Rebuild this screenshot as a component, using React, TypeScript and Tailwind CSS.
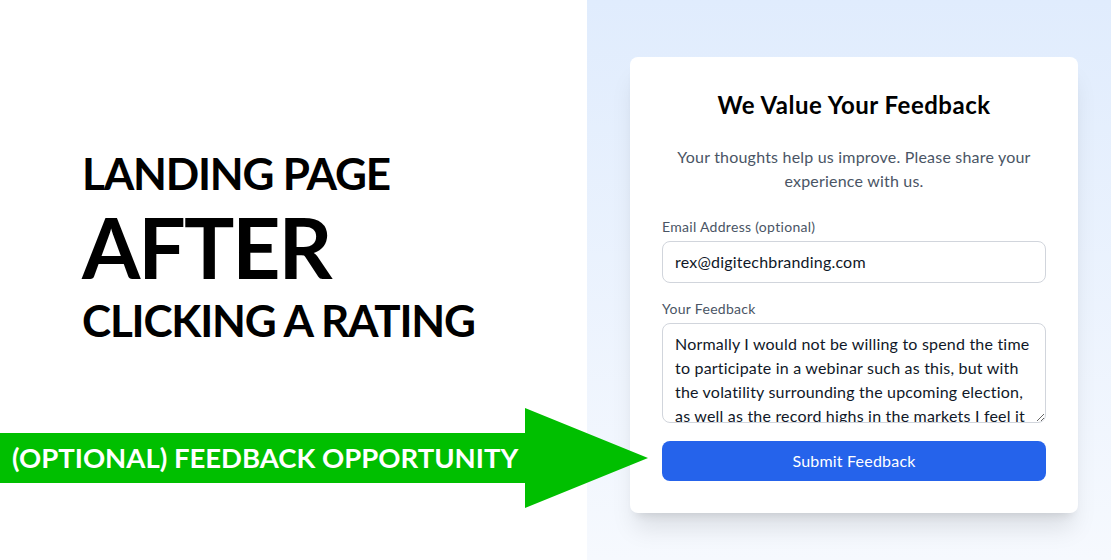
import React, { useState } from 'react';

const feedbackText =
  'Normally I would not be willing to spend the time to participate in a webinar such as this, but with the volatility surrounding the upcoming election, as well as the record highs in the markets I feel it was worth my while.';

const FeedbackArrow: React.FC = () => (
  <div className="absolute left-0 top-[408px] h-[100px] w-[650px] pointer-events-none">
    <svg className="absolute inset-0" width="650" height="100" viewBox="0 0 650 100">
      <polygon points="0,25 525,25 525,0 648,50 525,100 525,75 0,75" fill="#00bf00" />
    </svg>
    <div
      className="absolute left-[12px] top-[25px] h-[50px] flex items-center text-white font-bold text-[27.5px] leading-none"
      style={{ fontFamily: 'Lato, "Open Sans", sans-serif' }}
    >
      (OPTIONAL) FEEDBACK OPPORTUNITY
    </div>
  </div>
);

const App: React.FC = () => {
  const [email, setEmail] = useState('rex@digitechbranding.com');
  const [feedback, setFeedback] = useState(feedbackText);

  return (
    <div className="relative flex h-[560px] w-full overflow-hidden bg-white">
      <div className="w-[587px] shrink-0 flex flex-col pt-[151px] pl-[82px]" style={{ fontFamily: 'Lato, sans-serif' }}>
        <div className="text-black font-bold text-[44px] leading-none tracking-[-1.2px]">LANDING PAGE</div>
        <div className="text-black font-bold text-[84px] leading-none tracking-[-2px] mt-[10px]">AFTER</div>
        <div className="text-black font-bold text-[44px] leading-none tracking-[-1.2px] mt-[9px]">CLICKING A RATING</div>
      </div>

      <div className="flex-1 flex items-center justify-center bg-linear-to-b from-[#e0ecfd] to-[#f6f9fe] pl-[10px] pt-[9px]">
        <div className="w-[448px] bg-white rounded-lg shadow-xl p-8 tracking-[0.2px]" style={{ fontFamily: 'Lato, sans-serif' }}>
          <h2 className="text-2xl font-bold text-black text-center leading-8 mb-6 tracking-[0.5px]">We Value Your Feedback</h2>
          <p className="text-base text-gray-600 text-center leading-6 mb-6 px-2">
            Your thoughts help us improve. Please share your experience with us.
          </p>
          <label className="block text-sm text-gray-600 leading-5 mb-1 tracking-[0.3px]">Email Address (optional)</label>
          <input
            type="email"
            value={email}
            onChange={(e) => setEmail(e.target.value)}
            className="block w-full h-[42px] px-3 border border-gray-300 rounded-lg text-base text-gray-900 outline-none mb-4"
          />
          <label className="block text-sm text-gray-600 leading-5 mb-1 tracking-[0.3px]">Your Feedback</label>
          <textarea
            value={feedback}
            onChange={(e) => setFeedback(e.target.value)}
            className="block w-full h-[100px] px-3 py-2 border border-gray-300 rounded-lg text-base leading-6 text-gray-900 outline-none mb-[18px]"
          />
          <button className="block w-full h-10 bg-[#2563eb] text-white text-base rounded-lg">Submit Feedback</button>
        </div>
      </div>

      <FeedbackArrow />
    </div>
  );
};

export default App;
